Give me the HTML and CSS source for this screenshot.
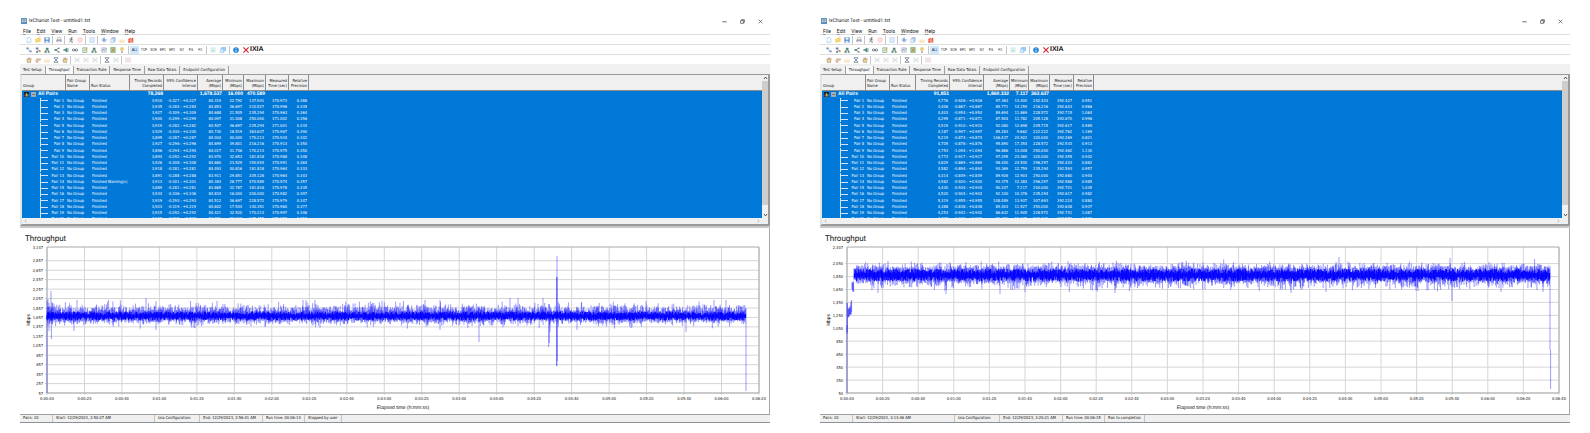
FILE: index.html
```html
<!DOCTYPE html>
<html lang="en">
<head>
    <meta charset="UTF-8">
    <title>IxChariot Test</title>
    <link rel="stylesheet" href="styles.css">
</head>
<body>
<svg class="sprites" aria-hidden="true">
    <symbol id="i-app" viewBox="0 0 16 16"><rect width="16" height="16" fill="#5f8db8"/><path d="M2 5h5M2 9h5M9 5h5M9 9h5" stroke="#fff" stroke-width="2" fill="none"/></symbol>
    <symbol id="i-new" viewBox="0 0 16 16"><path d="M3 1h7l3 3v11H3z" fill="#f4faff" stroke="#9cc0e6" stroke-width="1.5"/></symbol>
    <symbol id="i-open" viewBox="0 0 16 16"><path d="M2 14V5h4l2-3h6v10z" fill="#fbd870" stroke="#e0b040"/></symbol>
    <symbol id="i-save" viewBox="0 0 16 16"><path d="M1 1h14v14H1z" fill="#4d86cc"/><path d="M4 1h8v6H4zM4 10h8v5H4z" fill="#e8f0fa"/></symbol>
    <symbol id="i-print" viewBox="0 0 16 16"><path d="M4 1h9v6H4z" fill="#fff" stroke="#777"/><path d="M1 7h14v6H1z" fill="#8d99a8"/><path d="M4 10h8v5H4z" fill="#dde6ee"/></symbol>
    <symbol id="i-run" viewBox="0 0 16 16"><circle cx="10" cy="2.5" r="2" fill="#444"/><path d="M4 6l5-1-2 5 4 2v4M7 10l-4 4M9 5l4 4" fill="none" stroke="#555" stroke-width="2"/></symbol>
    <symbol id="i-stop" viewBox="0 0 16 16"><circle cx="8" cy="8" r="6.5" fill="#fcd9cf" stroke="#f5b8a8"/><path d="M5 8h6" stroke="#fff" stroke-width="2"/></symbol>
    <symbol id="i-page" viewBox="0 0 16 16"><path d="M2 1h12v14H2z" fill="#e9f3fc" stroke="#a9cdf0" stroke-width="1.5"/><path d="M5 5h6M5 8h6M5 11h6" stroke="#a9cdf0"/></symbol>
    <symbol id="i-form2" viewBox="0 0 16 16"><path d="M1 3h14v10H1z" fill="#fdf0ec" stroke="#e0ccc8" stroke-width="1.5"/><path d="M4 6h8M4 9h8" stroke="#dcc0bc"/></symbol>
    <symbol id="i-cut" viewBox="0 0 16 16"><path d="M8 1v13M2 8h13" stroke="#5f8fd0" stroke-width="3"/><path d="M4 4l8 8" stroke="#8fb0dd" stroke-width="2"/></symbol>
    <symbol id="i-copy" viewBox="0 0 16 16"><path d="M5 1h9v11H5z" fill="#b9cdea" stroke="#7a98cc"/><path d="M2 5h8v10H2z" fill="#eef4fc" stroke="#7a98cc"/></symbol>
    <symbol id="i-paste" viewBox="0 0 16 16"><path d="M2 8h12v6H2z" fill="#fde6c4" stroke="#f5cf9b"/><path d="M5 4h7v5H5z" fill="#fff5e6"/></symbol>
    <symbol id="i-del" viewBox="0 0 16 16"><path d="M1 5l6-4v14H1zM9 4l5-3v13l-5 1z" fill="#e8503c"/><path d="M1 10h14" stroke="#f6a090" stroke-width="2"/></symbol>
    <symbol id="i-pair" viewBox="0 0 16 16"><path d="M3 4l9 8" stroke="#777" stroke-width="1.5"/><path d="M1 1h6v5H1zM9 9h6v5H9z" fill="#6b93c9"/></symbol>
    <symbol id="i-multi" viewBox="0 0 16 16"><path d="M2 1h7v5H2zM3 10h5v5H3z" fill="#5f83b8"/><path d="M10 8h5v6h-5z" fill="#d79a4a"/><path d="M5 5l7 5" stroke="#667" stroke-width="1.5"/></symbol>
    <symbol id="i-tree" viewBox="0 0 16 16"><path d="M5 2h7v5H5zM1 11h6v4H1zM10 11h5v4h-5z" fill="#4a8a70"/><path d="M8 6v3M4 12V9h8v3" fill="none" stroke="#555" stroke-width="1.5"/></symbol>
    <symbol id="i-share" viewBox="0 0 16 16"><path d="M13 3L4 8l9 5" fill="none" stroke="#556" stroke-width="2"/><circle cx="3" cy="8" r="2.5" fill="#3f9a74"/><circle cx="13" cy="3" r="2" fill="#667"/><circle cx="13" cy="13" r="2" fill="#667"/></symbol>
    <symbol id="i-sound" viewBox="0 0 16 16"><path d="M1 6h4l6-5v14l-6-5H1z" fill="#4c8f86"/><path d="M13 3v10" stroke="#567" stroke-width="2"/></symbol>
    <symbol id="i-wave" viewBox="0 0 16 16"><circle cx="4" cy="8" r="3" fill="none" stroke="#567" stroke-width="2"/><circle cx="12" cy="8" r="3" fill="none" stroke="#567" stroke-width="2"/><path d="M5 8h6" stroke="#567" stroke-width="2"/></symbol>
    <symbol id="i-edit" viewBox="0 0 16 16"><path d="M2 2h11v13H2z" fill="#d8efdf" stroke="#5aa579" stroke-width="1.5"/><path d="M6 11l8-9" stroke="#e09a2c" stroke-width="2.5"/></symbol>
    <symbol id="i-grid" viewBox="0 0 16 16"><path d="M2 2h12v12H2z" fill="#dbe4ee" stroke="#8797ab"/><path d="M2 11l4-5 3 3 5-6" fill="none" stroke="#7d8ea6" stroke-width="2"/></symbol>
    <symbol id="i-form" viewBox="0 0 16 16"><path d="M2 1h12v14H2z" fill="#9fcf9a" stroke="#64a862" stroke-width="1.5"/><path d="M5 4l6 8M11 4l-6 8" stroke="#e06a4a" stroke-width="2"/></symbol>
    <symbol id="i-bulb" viewBox="0 0 16 16"><path d="M8 1c5 0 5 6 2 9H6C3 7 3 1 8 1z" fill="#e8d66a" stroke="#b8a850"/><path d="M6 12h4v3H6z" fill="#777"/></symbol>
    <symbol id="i-img" viewBox="0 0 16 16"><path d="M2 2h12v12H2z" fill="#dff3ee" stroke="#bfe0ea"/><path d="M4 11l4-5 4 5z" fill="#b5dcc0"/></symbol>
    <symbol id="i-win" viewBox="0 0 16 16"><path d="M4 1h11v9H4z" fill="#9fd0f6" stroke="#4fa3e0"/><path d="M1 5h9v10H1z" fill="#cfe8fb" stroke="#4fa3e0"/></symbol>
    <symbol id="i-info" viewBox="0 0 16 16"><circle cx="8" cy="8" r="7.5" fill="#1f86dd"/><path d="M8 3v2M8 7v6" stroke="#fff" stroke-width="2.2"/></symbol>
    <symbol id="i-hand" viewBox="0 0 16 16"><path d="M4 15L2 7l3 1V2l3 4 1-5 2 5 3-2-2 11z" fill="#f2cf94" stroke="#7a6a55"/></symbol>
    <symbol id="i-point" viewBox="0 0 16 16"><path d="M2 8l6-5 2 2h5v3l-6 1-2 6H4z" fill="#f0c9a0" stroke="#8a7a6a"/></symbol>
    <symbol id="i-off" viewBox="0 0 16 16"><path d="M2 2l12 12M14 2L2 14M2 8h12" stroke="#ccd2d0" stroke-width="1.6"/><path d="M2 2h12v12H2z" fill="none" stroke="#dde0df"/></symbol>
    <symbol id="i-cross" viewBox="0 0 16 16"><path d="M2 2h12M2 14h12" stroke="#667" stroke-width="2"/><path d="M3 3l10 10M13 3L3 13" stroke="#5577a5" stroke-width="2"/></symbol>
    <symbol id="i-x" viewBox="0 0 16 16"><path d="M1 1l14 14M15 1L1 15" stroke="#d9232e" stroke-width="3"/></symbol>
    <symbol id="i-chart" viewBox="0 0 16 16"><rect width="16" height="16" fill="#222"/><path d="M2 8h3v6H2z" fill="#ff4040"/><path d="M6 4h3v10H6z" fill="#ffe040"/><path d="M11 6h3v8h-3z" fill="#60d0ff"/></symbol>
    <symbol id="i-minus" viewBox="0 0 16 16"><path d="M1 1h14v14H1z" fill="#b9b0a8" stroke="#ddd"/><path d="M4 8h8" stroke="#444" stroke-width="2"/></symbol>
    <symbol id="i-min" viewBox="0 0 16 16"><path d="M1 9h14" stroke="#444" stroke-width="2.5"/></symbol>
    <symbol id="i-max" viewBox="0 0 16 16"><path d="M2 5h9v9H2zM5 5V2h9v9h-3" fill="none" stroke="#444" stroke-width="2.2"/></symbol>
    <symbol id="i-close" viewBox="0 0 16 16"><path d="M2 2l12 12M14 2L2 14" stroke="#444" stroke-width="2"/></symbol>
    <symbol id="i-up" viewBox="0 0 16 16"><path d="M3 11l5-6 5 6" fill="none" stroke="#444" stroke-width="3"/></symbol>
    <symbol id="i-down" viewBox="0 0 16 16"><path d="M3 5l5 6 5-6" fill="none" stroke="#444" stroke-width="3"/></symbol>
    <symbol id="i-left" viewBox="0 0 16 16"><path d="M11 3L6 8l5 5" fill="none" stroke="#999" stroke-width="2"/></symbol>
    <symbol id="i-right" viewBox="0 0 16 16"><path d="M5 3l5 5-5 5" fill="none" stroke="#999" stroke-width="2"/></symbol>
</svg>

<main class="desktop" id="desktop"></main>

<template id="windowTpl">
    <section class="window">
        <header class="titlebar">
            <svg class="icon"><use href="#i-app"/></svg>
            <h1>IxChariot Test - untitled1.tst</h1>
            <button aria-label="Minimize"><svg><use href="#i-min"/></svg></button>
            <button aria-label="Restore"><svg><use href="#i-max"/></svg></button>
            <button aria-label="Close"><svg><use href="#i-close"/></svg></button>
        </header>
        <nav class="menubar">
            <button><u>F</u>ile</button>
            <button><u>E</u>dit</button>
            <button><u>V</u>iew</button>
            <button><u>R</u>un</button>
            <button><u>T</u>ools</button>
            <button><u>W</u>indow</button>
            <button><u>H</u>elp</button>
        </nav>
        <div class="toolbar" data-tools="new open save | print | run stop | page | cut copy paste del"></div>
        <div class="toolbar spread" data-tools="pair multi tree share sound wave edit tree grid form bulb | =ALL =TCP =SCR =EP1 =EP2 =SO =PG =FC | img win | info"></div>
        <div class="toolbar" data-tools="hand point paste cross hand | off off off | cross off | form2"></div>
        <div class="tabs">
            <button>Test Setup</button>
            <button class="active">Throughput</button>
            <button>Transaction Rate</button>
            <button>Response Time</button>
            <button>Raw Data Totals</button>
            <button>Endpoint Configuration</button>
        </div>
        <div class="panel">
            <div class="grid">
                <table>
                    <colgroup><col><col><col><col><col><col><col><col><col><col><col></colgroup>
                    <thead>
                        <tr>
                            <th>Group</th>
                            <th>Pair Group<br>Name</th>
                            <th>Run Status</th>
                            <th>Timing Records<br>Completed</th>
                            <th>95% Confidence<br>Interval</th>
                            <th>Average<br>(Mbps)</th>
                            <th>Minimum<br>(Mbps)</th>
                            <th>Maximum<br>(Mbps)</th>
                            <th>Measured<br>Time (sec)</th>
                            <th>Relative<br>Precision</th>
                            <th></th>
                        </tr>
                    </thead>
                    <tbody></tbody>
                </table>
            </div>
            <div class="vscroll">
                <svg><use href="#i-up"/></svg>
                <span class="thumb"></span>
                <svg><use href="#i-down"/></svg>
            </div>
            <div class="hscroll">
                <svg><use href="#i-left"/></svg>
                <svg><use href="#i-right"/></svg>
            </div>
        </div>
        <svg class="chart" viewBox="0 0 750 186"></svg>
        <footer class="status"></footer>
    </section>
</template>

<script src="script.js"></script>
</body>
</html>
```
FILE: styles.css
```css
* {
    box-sizing: border-box;
    margin: 0;
    padding: 0;
}
body {
    background: #fff;
    color: #111;
    font: 4px/6px "DejaVu Sans Condensed", "Liberation Sans", sans-serif;
    text-rendering: geometricPrecision;
}
button {
    border: 0;
    background: none;
    color: inherit;
    font: inherit;
}
svg {
    display: block;
}
.sprites {
    display: none;
}
.desktop {
    display: grid;
    grid-template-columns: 1fr 1fr;
    gap: 50px;
    padding: 15px 20px 0;
}
.window {
    min-width: 0;
    border-bottom: 1px solid #8a9196;
}

/* title and menu */
.titlebar {
    display: flex;
    align-items: center;
    height: 12px;
    padding: 0 6px 0 1px;
    font-family: Roboto, sans-serif;
}
.titlebar .icon {
    width: 6px;
    height: 6px;
    margin-right: 2px;
}
.titlebar h1 {
    flex: 1;
    font-size: 5px;
    font-weight: normal;
}
.titlebar button {
    width: 6px;
    margin-left: 12px;
}
.titlebar button svg {
    width: 5px;
    height: 5px;
}
.menubar {
    display: flex;
    gap: 6px;
    height: 7px;
    padding-left: 3px;
    font-family: Roboto, sans-serif;
    font-size: 5px;
}
.menubar u {
    text-decoration-thickness: 1px;
    text-decoration-color: #999;
}

/* toolbars */
.toolbar {
    display: flex;
    align-items: center;
    height: 10px;
    padding-left: 4px;
    border-top: 1px solid #dedede;
}
.tools {
    display: flex;
}
.tools button {
    flex: 1;
    display: flex;
    align-items: center;
    justify-content: center;
    min-width: 9px;
    height: 8px;
    font-family: "Liberation Sans", sans-serif;
    font-size: 3px;
}
.tools svg {
    width: 6px;
    height: 6px;
}
.tools .on {
    background: #cce8ff;
}
.sep {
    width: 1px;
    height: 8px;
    margin: 0 1px;
    background: #c4c4c4;
}
.spread .tools:nth-of-type(1) {
    width: 103px;
}
.spread .tools:nth-of-type(2) {
    width: 75px;
}
.spread .tools:nth-of-type(3) {
    width: 20px;
}
.logo {
    display: flex;
    align-items: center;
    gap: 1px;
    margin-left: 3px;
    font: bold 7px/8px "Liberation Sans", sans-serif;
}
.logo svg {
    width: 6px;
    height: 6px;
}

/* tabs */
.tabs {
    display: flex;
    height: 10px;
    padding-top: 2px;
    background: #f0f0f0;
}
.tabs button {
    padding: 0 3px;
    border-right: 1px solid #a0a0a0;
}
.tabs .active {
    background: #f8f8f8;
}

/* results table */
.panel {
    display: grid;
    grid-template-columns: 1fr 6px;
    grid-template-rows: 143px 6px;
    border: 1px solid #9a9a9a;
    border-width: 1px 2px 2px;
    border-left-color: #e4e4e4;
    box-shadow: 0 2px #c8c8c8;
    background: #f0f0f0;
}
.grid {
    overflow: hidden;
    background: #0078d7;
}
table {
    width: 100%;
    table-layout: fixed;
    border-collapse: separate;
    border-spacing: 0;
}
col:nth-child(1) { width: 44px; }
col:nth-child(2) { width: 24px; }
col:nth-child(3) { width: 40px; }
col:nth-child(4) { width: 34px; }
col:nth-child(5) { width: 34px; }
col:nth-child(6) { width: 25px; }
col:nth-child(7) { width: 21px; }
col:nth-child(8) { width: 22px; }
col:nth-child(9) { width: 23px; }
col:nth-child(10) { width: 20px; }
.window:nth-child(2) col:nth-child(3) { width: 26px; }
.window:nth-child(2) col:nth-child(6) { width: 26px; }
.window:nth-child(2) col:nth-child(7) { width: 19px; }
.window:nth-child(2) col:nth-child(8) { width: 21px; }
.window:nth-child(2) col:nth-child(9) { width: 24px; }
th {
    height: 16px;
    padding: 0 1px 2px;
    border-right: 1px solid #8c8c8c;
    border-bottom: 1px solid #8c8c8c;
    background: #f0f0f0;
    font-weight: normal;
    line-height: 5px;
    text-align: right;
    vertical-align: bottom;
    white-space: nowrap;
}
th:nth-child(-n+3) {
    text-align: left;
}
th:last-child {
    border-right: 0;
}
td {
    height: 6px;
    padding: 0 2px 0 1px;
    color: #fff;
    text-align: right;
    white-space: nowrap;
}
td:nth-child(2),
td:nth-child(3) {
    text-align: left;
}
td:nth-child(3) {
    padding-left: 2px;
}
.all td {
    padding-right: 1px;
    font-family: "Liberation Sans", sans-serif;
    font-size: 5px;
    font-weight: bold;
}
/* every fourth row carries the spare pixel of the scaled row pitch */
tbody tr:nth-child(4n+2) td {
    height: 7px;
}
.all-name {
    display: flex;
    align-items: center;
    gap: 2px;
    padding-left: 1px;
}
.all-name svg {
    width: 5px;
    height: 5px;
}
.branch {
    display: flex;
    align-items: center;
    margin-left: 17px;
    border-left: 1px solid #cfe4f7;
}
.branch::before {
    content: "";
    width: 7px;
    height: 1px;
    margin-right: auto;
    background: #cfe4f7;
}
.vscroll {
    display: flex;
    flex-direction: column;
    align-items: center;
}
.vscroll svg,
.hscroll svg {
    width: 5px;
    height: 6px;
}
.thumb {
    flex: 1;
    align-self: stretch;
    margin-bottom: 7px;
    background: #cdcdcd;
}
.hscroll {
    display: flex;
    justify-content: space-between;
    padding: 0 1px;
}

/* chart */
.chart {
    width: 100%;
    margin-top: 2px;
}
.chart text {
    fill: #111;
    font-size: 4px;
}
.chart .heading {
    font-family: Roboto, sans-serif;
    font-size: 8px;
}
.chart .axis {
    font-family: "Liberation Sans", sans-serif;
    font-size: 5px;
}
.chart .lines {
    fill: none;
    stroke: #d6d6d6;
}
.chart .frame {
    fill: none;
    stroke: #a8a8a8;
}
.chart .core,
.chart .series {
    fill: none;
    stroke: #00f;
}
.chart .core {
    stroke-width: 1px;
}
.chart .series {
    stroke-width: .4px;
}

/* status bar */
.status {
    display: flex;
    height: 8px;
    border-top: 1px solid #a0a0a0;
    background: #f0f0f0;
}
.status span {
    padding: 0 3px;
    border-right: 1px solid #c4c4c4;
    white-space: nowrap;
}
.status span:nth-child(1) { width: 33px; }
.status span:nth-child(2) { width: 102px; }
.status span:nth-child(3) { width: 45px; }
.status span:nth-child(4) { width: 63px; }
.status span:nth-child(5) { width: 42px; }
```
FILE: script.js
```js
var tests = [
    {
        total: ["78,268", "1,678.537", "16.000", "470.589"],
        rows: [
            "3,910 0.327 84.319 22.792 137.931 370.973 0.388",
            "3,935 0.284 84.853 36.697 210.527 370.996 0.335",
            "3,927 0.309 84.688 21.505 235.294 370.963 0.364",
            "3,900 0.299 84.097 31.008 250.000 371.002 0.356",
            "3,919 0.282 84.507 36.697 235.294 371.001 0.334",
            "3,929 0.330 84.730 18.519 363.637 370.967 0.390",
            "3,895 0.287 84.004 40.000 170.213 370.934 0.342",
            "3,927 0.296 84.699 39.801 216.216 370.913 0.350",
            "3,896 0.294 84.017 31.746 170.213 370.975 0.350",
            "3,894 0.292 83.970 32.653 181.818 370.988 0.348",
            "3,926 0.308 84.660 23.529 150.944 370.991 0.364",
            "3,918 0.281 84.493 40.816 181.818 370.964 0.333",
            "3,891 0.288 83.911 29.851 205.128 370.964 0.343",
            "3,913 0.301 84.383 28.777 470.589 370.974 0.357",
            "3,889 0.281 83.865 32.787 181.818 370.978 0.335",
            "3,934 0.336 84.834 16.000 200.000 370.982 0.397",
            "3,919 0.293 84.512 36.697 228.572 370.979 0.347",
            "3,923 0.319 84.602 17.544 140.351 370.960 0.377",
            "3,915 0.292 84.421 32.520 170.213 370.997 0.346",
            "3,908 0.298 84.286 29.963 145.455 370.958 0.353"
        ],
        warning: 14,
        status: ["Pairs: 20", "Start: 12/29/2023, 2:50:27 AM", "Ixia Configuration:", "End: 12/29/2023, 2:56:41 AM", "Run time: 00:06:14", "Stopped by user"],
        min: 57, max: 3147, top: 2857, seconds: 380,
        from: 27, to: 726, mid: 88, core: 5, spread: 6, up: 3, down: 2,
        // x, y1, y2 of the peaks that leave the band
        peaks: [[27, 165, 73], [28, 71, 98], [29, 75, 103], [30, 78, 96], [31, 63, 92], [31.4, 80, 111], [32, 74, 93], [54, 84, 103],
            [57, 72, 88], [126, 70, 88], [136, 73, 102], [197, 73, 88], [174, 85, 100], [175, 85, 100], [283, 72, 88], [286, 72, 88],
            [405, 72, 88], [420, 72, 102], [459, 80, 114], [490, 70, 88], [498, 70, 98], [523, 70, 88], [528.6, 76, 119], [529.4, 76, 115], [530, 78, 104],
            [536.6, 49, 138], [537, 28, 138], [537.2, 49, 133], [557, 80, 102], [611, 80, 100], [626, 73, 88], [666, 80, 104], [694, 72, 88], [706, 72, 88],
            [711, 80, 92], [726, 80, 163]]
    },
    {
        total: ["91,851", "1,860.332", "7.117", "363.637"],
        rows: [
            "4,776 0.926 97.363 13.400 242.424 392.427 0.951",
            "4,406 0.867 89.771 14.159 216.216 392.643 0.966",
            "4,403 0.954 89.694 11.869 228.572 392.715 1.064",
            "4,295 0.871 87.504 11.782 205.128 392.670 0.996",
            "4,519 0.910 92.080 12.698 205.715 392.617 0.989",
            "4,187 0.997 85.283 9.662 222.222 392.762 1.169",
            "5,219 0.874 106.437 24.922 320.000 392.269 0.821",
            "4,705 0.876 95.890 17.354 228.572 392.533 0.913",
            "4,753 1.094 96.886 13.008 250.000 392.462 1.130",
            "4,773 0.917 97.295 23.460 320.000 392.455 0.942",
            "4,829 0.869 98.440 24.540 296.297 392.443 0.882",
            "4,582 0.894 93.369 12.759 235.294 392.593 0.957",
            "4,414 0.849 89.926 12.903 250.000 392.680 0.944",
            "4,582 0.920 93.375 12.384 296.297 392.568 0.985",
            "4,430 0.934 90.247 7.117 200.000 392.701 1.035",
            "4,520 0.904 92.100 10.376 235.294 392.617 0.982",
            "5,319 0.955 108.489 13.937 307.693 392.224 0.880",
            "4,388 0.838 89.403 11.527 250.000 392.648 0.937",
            "4,253 0.942 86.632 11.905 228.572 392.741 1.087",
            "4,498 1.000 91.681 11.645 200.000 392.570 1.090"
        ],
        status: ["Pairs: 20", "Start: 12/29/2023, 3:13:46 AM", "Ixia Configuration:", "End: 12/29/2023, 3:20:21 AM", "Run time: 00:06:35", "Ran to completion"],
        min: 50, max: 2307, top: 2050, seconds: 400,
        from: 34.4, to: 730, mid: 47, core: 7, spread: 5, up: 2, down: 4,
        peaks: [[27, 165, 97], [27, 106, 75], [27.3, 104, 75], [28, 90, 80], [28.4, 89, 81], [28.8, 88, 80], [29.2, 89, 81], [29.6, 87, 79], [30, 87, 78],
            [30.4, 86, 80], [30.8, 87, 75], [31.2, 86, 73], [31.6, 84, 72], [32, 61, 54], [32.4, 63, 55], [32.8, 62, 54], [33.2, 64, 55], [33.6, 64, 53],
            [34, 52, 40], [58, 46, 65], [68, 33, 46], [126, 46, 66], [180, 46, 66], [205, 46, 64], [295, 46, 65], [471, 46, 65], [506, 46, 64],
            [519, 29, 46], [596, 46, 63], [598, 46, 63], [630, 30, 46], [632, 46, 73], [681, 46, 64], [714.6, 31, 46], [723, 46, 64], [730, 38, 122], [730.6, 122, 161]]
    }
];

var desktop = document.getElementById("desktop");
var tpl = document.getElementById("windowTpl");

function pad(n) {
    return n < 10 ? "0" + n : n;
}

function fillToolbars(win) {
    win.querySelectorAll(".toolbar").forEach(function (bar) {
        var html = bar.dataset.tools.split(" | ").map(function (group) {
            return "<div class='tools'>" + group.split(" ").map(function (name) {
                if (name[0] == "=") {
                    return "<button" + (name == "=ALL" ? " class='on'" : "") + ">" + name.slice(1) + "</button>";
                }
                return "<button aria-label='" + name + "'><svg><use href='#i-" + name + "'/></svg></button>";
            }).join("") + "</div>";
        }).join("<i class='sep'></i>");
        if (bar.classList.contains("spread")) {
            html += "<span class='logo'><svg><use href='#i-x'/></svg>IXIA</span>";
        }
        bar.innerHTML = html;
    });
}

function fillTable(win, test) {
    var t = test.total;
    var html = "<tr class='all'><td><div class='all-name'><svg><use href='#i-chart'/></svg><svg><use href='#i-minus'/></svg>All Pairs</div></td>" +
        "<td></td><td></td><td>" + t[0] + "</td><td></td><td>" + t[1] + "</td><td>" + t[2] + "</td><td>" + t[3] + "</td><td></td><td></td><td></td></tr>";
    test.rows.forEach(function (row, i) {
        var v = row.split(" ");
        var ci = "-" + v[1] + " : +" + v[1];
        var state = "Finished" + (test.warning == i + 1 ? " Warning(s)" : "");
        html += "<tr><td><div class='branch'>Pair " + (i + 1) + "</div></td><td>No Group</td><td>" + state + "</td>";
        [v[0], ci, v[2], v[3], v[4], v[5], v[6], ""].forEach(function (c) {
            html += "<td>" + c + "</td>";
        });
        html += "</tr>";
    });
    win.querySelector("tbody").innerHTML = html;
}

function drawChart(win, test, seed) {
    var L = 27, R = 739, T = 19, B = 165;
    function rnd() {
        seed = (seed * 16807) % 2147483647;
        return seed / 2147483647;
    }
    function tail() {
        return Math.pow(rnd(), 4);
    }
    var html = "<text class='heading' x='5' y='13'>Throughput</text>";
    var lines = "", x, y, v, s;
    for (v = test.min; v <= test.top; v += 200) {
        y = B - (v - test.min) / (test.max - test.min) * (B - T);
        lines += "M" + (L - 2) + " " + y.toFixed(1) + "H" + R;
        html += "<text x='23' y='" + (y + 1.5).toFixed(1) + "' text-anchor='end'>" + v.toLocaleString("en-US") + "</text>";
    }
    html += "<text x='23' y='20.5' text-anchor='end'>" + test.max.toLocaleString("en-US") + "</text>";
    for (s = 0; s <= test.seconds; s += 20) {
        x = L + s / test.seconds * (R - L);
        lines += "M" + x.toFixed(1) + " " + T + "V" + (B + 2);
        html += "<text x='" + x.toFixed(1) + "' y='171.5' text-anchor='middle'>0:" + pad(Math.floor(s / 60)) + ":" + pad(s % 60) + "</text>";
    }
    html += "<path class='lines' d='" + lines + "'/>";
    html += "<path class='frame' d='M" + L + " " + T + "H" + R + "V" + B + "H" + L + "zM749.5 0V186'/>";

    // solid middle of the band, then one thin stroke per sample for its fringe
    var core = "", d = "", hi, lo;
    for (x = test.from; x < test.to; x += 0.8) {
        hi = test.mid - test.core * (0.2 + rnd() * 0.7);
        lo = test.mid + test.core * (0.2 + rnd() * 0.7);
        core += "M" + x.toFixed(1) + " " + hi.toFixed(1) + "V" + lo.toFixed(1);
    }
    var swell = 1;
    for (x = test.from; x < test.to; x += 0.39) {
        if (rnd() < 0.15) {
            swell = 0.5 + rnd() * 0.8;
        }
        hi = test.mid - test.core * rnd() - test.spread * swell * rnd() - test.up * 2 * tail();
        lo = test.mid + test.core * rnd() + test.spread * swell * rnd() * rnd() + test.down * 2 * tail();
        d += "M" + x.toFixed(2) + " " + hi.toFixed(1) + "V" + lo.toFixed(1);
    }
    test.peaks.forEach(function (p) {
        d += "M" + p[0] + " " + p[1] + "V" + p[2];
    });
    html += "<path class='core' d='" + core + "'/>";
    html += "<path class='series' d='" + d + "'/>";
    html += "<text class='axis' x='383' y='181' text-anchor='middle'>Elapsed time (h:mm:ss)</text>";
    html += "<text class='axis' transform='translate(10 92) rotate(-90)' text-anchor='middle'>Mbps</text>";
    win.querySelector(".chart").innerHTML = html;
}

tests.forEach(function (test, i) {
    var win = tpl.content.cloneNode(true).querySelector(".window");
    fillToolbars(win);
    fillTable(win, test);
    drawChart(win, test, 4711 + i * 97);
    win.querySelector(".status").innerHTML = test.status.map(function (s) {
        return "<span>" + s + "</span>";
    }).join("");
    desktop.appendChild(win);
});
```
